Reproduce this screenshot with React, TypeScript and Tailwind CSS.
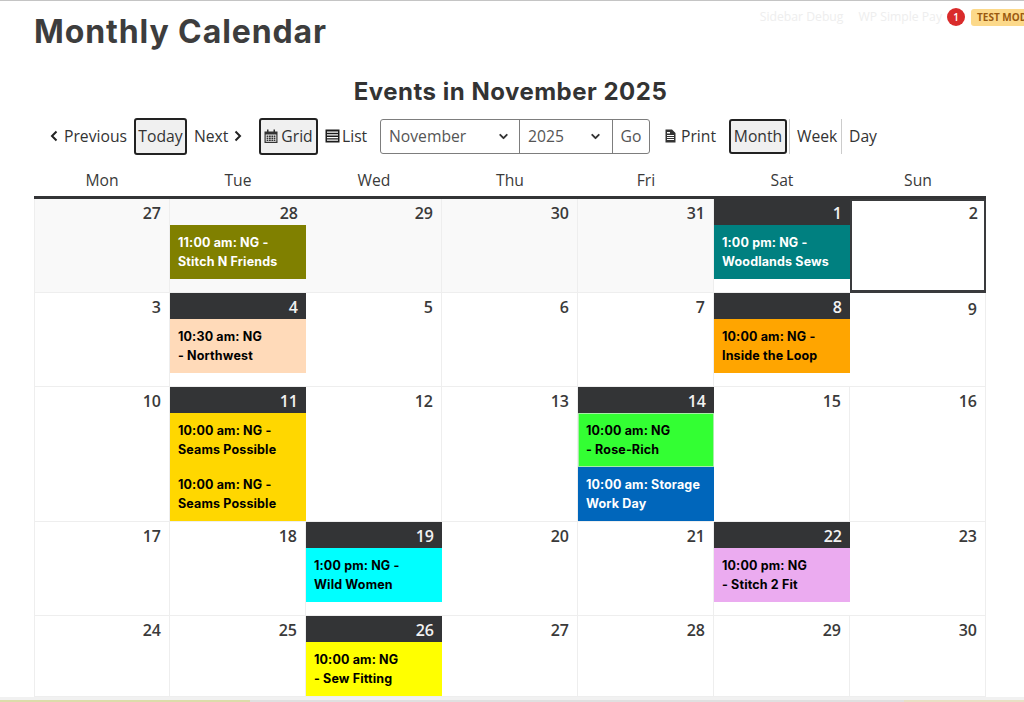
import React from 'react';
import { ChevronDown } from 'lucide-react';

type CalEvent = { time: string; name: string; bg: string; text: string; ring?: string };
type Day = { n: number; dark?: boolean; past?: boolean; today?: boolean; belowToday?: boolean; events?: CalEvent[] };

const weekdays = ['Mon', 'Tue', 'Wed', 'Thu', 'Fri', 'Sat', 'Sun'];

const weeks: { height: string; days: Day[] }[] = [
  {
    height: 'h-[94px]',
    days: [
      { n: 27, past: true },
      {
        n: 28,
        past: true,
        events: [{ time: '11:00 am: NG -', name: 'Stitch N Friends', bg: 'bg-[#808000]', text: 'text-white' }],
      },
      { n: 29, past: true },
      { n: 30, past: true },
      { n: 31, past: true },
      {
        n: 1,
        dark: true,
        events: [{ time: '1:00 pm: NG -', name: 'Woodlands Sews', bg: 'bg-[#008080]', text: 'text-white' }],
      },
      { n: 2, today: true },
    ],
  },
  {
    height: 'h-[94px]',
    days: [
      { n: 3 },
      {
        n: 4,
        dark: true,
        events: [{ time: '10:30 am: NG', name: '- Northwest', bg: 'bg-[#ffdab9]', text: 'text-black' }],
      },
      { n: 5 },
      { n: 6 },
      { n: 7 },
      {
        n: 8,
        dark: true,
        events: [{ time: '10:00 am: NG -', name: 'Inside the Loop', bg: 'bg-[#ffa500]', text: 'text-black' }],
      },
      { n: 9, belowToday: true },
    ],
  },
  {
    height: 'h-[135px]',
    days: [
      { n: 10 },
      {
        n: 11,
        dark: true,
        events: [
          { time: '10:00 am: NG -', name: 'Seams Possible', bg: 'bg-[#ffd700]', text: 'text-black' },
          { time: '10:00 am: NG -', name: 'Seams Possible', bg: 'bg-[#ffd700]', text: 'text-black' },
        ],
      },
      { n: 12 },
      { n: 13 },
      {
        n: 14,
        dark: true,
        events: [
          { time: '10:00 am: NG', name: '- Rose-Rich', bg: 'bg-[#33ff33]', text: 'text-black', ring: 'border border-[#a8eea8] pl-[7px]' },
          { time: '10:00 am: Storage', name: 'Work Day', bg: 'bg-[#0066bb]', text: 'text-white' },
        ],
      },
      { n: 15 },
      { n: 16 },
    ],
  },
  {
    height: 'h-[94px]',
    days: [
      { n: 17 },
      { n: 18 },
      {
        n: 19,
        dark: true,
        events: [{ time: '1:00 pm: NG -', name: 'Wild Women', bg: 'bg-[#00ffff]', text: 'text-black' }],
      },
      { n: 20 },
      { n: 21 },
      {
        n: 22,
        dark: true,
        events: [{ time: '10:00 pm: NG', name: '- Stitch 2 Fit', bg: 'bg-[#ebabf0]', text: 'text-black' }],
      },
      { n: 23 },
    ],
  },
  {
    height: 'h-[81px]',
    days: [
      { n: 24 },
      { n: 25 },
      {
        n: 26,
        dark: true,
        events: [{ time: '10:00 am: NG', name: '- Sew Fitting', bg: 'bg-[#ffff00]', text: 'text-black' }],
      },
      { n: 27 },
      { n: 28 },
      { n: 29 },
      { n: 30 },
    ],
  },
];

const ArrowLeft = () => (
  <svg width="8" height="12" viewBox="0 0 8 12" className="mt-[-2px] shrink-0 text-[#222]" fill="none" stroke="currentColor" strokeWidth="2">
    <path d="M6.5 1.5 2 6l4.5 4.5" />
  </svg>
);

const ArrowRight = () => (
  <svg width="8" height="12" viewBox="0 0 8 12" className="mt-[-2px] shrink-0 text-[#222]" fill="none" stroke="currentColor" strokeWidth="2">
    <path d="M1.5 1.5 6 6l-4.5 4.5" />
  </svg>
);

const CalendarIcon = () => (
  <svg width="14" height="15" viewBox="0 0 14 15" className="shrink-0 text-[#333]" fill="currentColor">
    <path d="M0.5 2.5h2.5V0.5h1.5v2h5v-2H11v2h2.5V14H0.5V2.5zM1.7 5.5V12.8h10.6V5.5H1.7z" />
    <path d="M2.6 6.4h1.8v1.6H2.6zM5 6.4h1.8v1.6H5zM7.4 6.4h1.8v1.6H7.4zM9.8 6.4h1.6v1.6H9.8zM2.6 8.6h1.8v1.6H2.6zM5 8.6h1.8v1.6H5zM7.4 8.6h1.8v1.6H7.4zM9.8 8.6h1.6v1.6H9.8zM2.6 10.7h1.8v1.4H2.6zM5 10.7h1.8v1.4H5zM7.4 10.7h1.8v1.4H7.4zM9.8 10.7h1.6v1.4H9.8z" />
  </svg>
);

const ListIcon = () => (
  <svg width="15" height="14" viewBox="0 0 15 14" className="shrink-0 text-[#1c1c1c]" fill="currentColor">
    <path d="M0.5 0.5h14v13h-14V0.5zM2 2.6v1.2h11V2.6H2zM2 5.3v1.2h11V5.3H2zM2 8v1.2h11V8H2zM2 10.6v1.2h11v-1.2H2z" />
  </svg>
);

const PrintIcon = () => (
  <svg width="11" height="14" viewBox="0 0 11 14" className="shrink-0 text-[#333]" fill="currentColor">
    <path d="M0.5 0.5h6.5l3.5 3.5v9.5H0.5V0.5zM2 6v1h7V6H2zM2 8v1h7V8H2zM2 10v1h7v-1H2zM2 3v1.5h3V3H2z" />
  </svg>
);

const DayCell = ({ day }: { day: Day }) => {
  const hasEvents = Boolean(day.events);
  let frame = 'border-b border-r border-[#eeeeee] first:border-l';
  if (hasEvents) frame = 'border-b border-[#eeeeee]';
  if (day.today) frame = 'relative z-10 border-2 border-b-[3px] border-[#3a3b3d]';

  return (
    <div className={`flex flex-col ${frame} ${day.past ? 'bg-[#f9f9f9]' : 'bg-white'}`}>
      <div
        className={`flex h-[26px] shrink-0 justify-end pr-2 text-base leading-[26px] font-[560] ${
          day.dark ? 'bg-[#333436] pt-[1px] text-[#f2f2f2]' : 'pt-[1px] text-[#3a3a3a]'
        } ${day.belowToday ? 'mt-[2px]' : ''} ${day.today ? '-mt-[2px] -mr-[2px]' : ''}`}
      >
        {day.n}
      </div>
      {day.events?.map((ev, i) => (
        <div
          key={i}
          className={`flex h-[54px] shrink-0 flex-col justify-center px-2 font-['Inter',sans-serif] text-[12.5px] leading-[19px] font-bold tracking-[0.15px] ${ev.bg} ${ev.text} ${ev.ring ?? ''}`}
        >
          <span>{ev.time}</span>
          <span>{ev.name}</span>
        </div>
      ))}
    </div>
  );
};

export default function App() {
  const activeBtn = 'flex items-center rounded-[3px] border-2 border-[#222] bg-[#f0f0f0] text-[#333]';
  return (
    <div className="relative h-[702px] w-[1024px] overflow-hidden border-t border-[#c4c4c4] bg-white font-['Open_Sans',sans-serif] text-[#333]">
      {/* Admin bar leftovers */}
      <div className="absolute top-0 right-0 flex h-[32px] items-center text-[12.2px] text-[#eeeeee]">
        <span className="mr-[15px]">Sidebar Debug</span>
        <span className="mr-[5px]">WP Simple Pay</span>
        <span className="flex h-[18px] w-[18px] items-center justify-center rounded-full bg-[#d92b2b] text-[10px] font-semibold text-white">
          1
        </span>
        <span className="ml-[6px] h-[17px] w-[53px] overflow-hidden rounded-l-[3px] bg-[#fcd98a] pl-[6px] text-[10px] leading-[17px] font-bold whitespace-nowrap text-[#9a5a10]">
          TEST MODE
        </span>
      </div>

      <h1 className="mt-[10px] ml-[34px] font-['Inter',sans-serif] text-[32px] leading-[42px] font-bold tracking-[0.9px] text-[#3d3d3d]">
        Monthly Calendar
      </h1>

      <h2 className="mt-[24px] pr-[3px] text-center font-['Inter',sans-serif] text-[24px] leading-[30px] font-bold tracking-[0.5px] text-[#333]">
        Events in November 2025
      </h2>

      {/* Toolbar */}
      <div className="mt-[11px] ml-[50px] flex h-[37px] items-center text-[15.7px]">
        <ArrowLeft />
        <span className="ml-[6px] w-[70px]">Previous</span>
        <button type="button" className={`${activeBtn} h-[37px] w-[53px] justify-center`}>Today</button>
        <span className="ml-[7px] w-[34px]">Next</span>
        <span className="ml-[6px] flex"><ArrowRight /></span>
        <button type="button" className={`${activeBtn} ml-[17px] h-[37px] w-[59px] justify-center gap-[3px]`}>
          <CalendarIcon />
          Grid
        </button>
        <span className="ml-[7px] flex w-[43px] items-center gap-[2px]">
          <ListIcon />
          List
        </span>
        <div className="ml-[12px] flex h-[35px] items-center text-[#555]">
          <div className="flex h-full w-[140px] items-center justify-between rounded-l-[3px] border border-[#7d7d7d] pr-[9px] pl-2">
            November
            <ChevronDown size={13} strokeWidth={3.5} className="text-[#333]" />
          </div>
          <div className="-ml-px flex h-full w-[94px] items-center justify-between border border-[#7d7d7d] pr-[10px] pl-2">
            2025
            <ChevronDown size={13} strokeWidth={3.5} className="text-[#333]" />
          </div>
          <div className="-ml-px flex h-full w-[38px] items-center justify-center rounded-r-[3px] border border-[#7d7d7d]">
            Go
          </div>
        </div>
        <span className="ml-[15px] flex w-[52px] items-center gap-[5px]">
          <PrintIcon />
          Print
        </span>
        <button type="button" className={`${activeBtn} ml-[12px] h-[35px] w-[58px] justify-center`}>Month</button>
        <span className="ml-[2px] flex h-[35px] w-[47px] items-center border-l border-[#cccccc] pl-[7px]">Week</span>
        <span className="ml-[5px] flex h-[35px] items-center border-l border-[#cccccc] pl-[7px]">Day</span>
      </div>

      {/* Weekday header */}
      <div className="mt-[10px] ml-[34px] grid h-[31px] w-[952px] grid-cols-7 items-center text-center text-[15.7px] font-medium text-[#3a3a3a]">
        {weekdays.map((d) => (
          <div key={d}>{d}</div>
        ))}
      </div>

      {/* Calendar grid */}
      <div className="ml-[34px] w-[952px] border-t-[3px] border-[#333436]">
        {weeks.map((week, i) => (
          <div key={i} className={`grid grid-cols-7 ${week.height}`}>
            {week.days.map((day, j) => (
              <DayCell key={j} day={day} />
            ))}
          </div>
        ))}
      </div>

      {/* Window edge at the bottom of the capture */}
      <div className="absolute right-0 bottom-0 left-0 flex h-[5px] flex-col">
        <div className="h-[3px] bg-[#f1f1f1]" />
        <div className="flex h-[2px] bg-[#e0e0e0]">
          <div className="h-full w-[250px] bg-[#dcdcaa]" />
          <div className="ml-auto h-full w-[120px] bg-[#e8e0c4]" />
        </div>
      </div>
    </div>
  );
}
